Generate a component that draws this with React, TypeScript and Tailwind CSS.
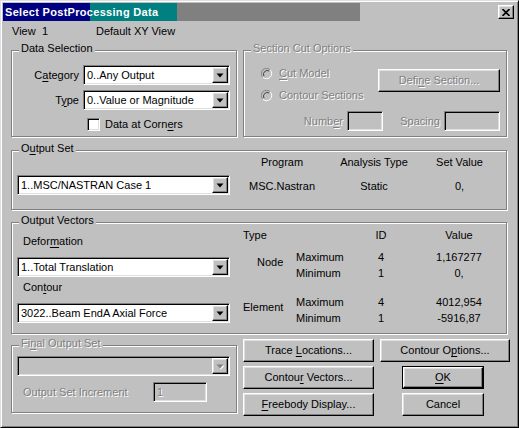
import React from 'react';

const sunken =
  'border border-t-[#808080] border-l-[#808080] border-b-white border-r-white shadow-[inset_1px_1px_0_#000,inset_-1px_-1px_0_#dfdfdf]';
const raised =
  'border border-t-white border-l-white border-b-black border-r-black shadow-[inset_-1px_-1px_0_#808080,inset_1px_1px_0_#dfdfdf]';
const dim = 'text-[#808080] [text-shadow:1px_1px_0_#fff]';

function U({ children }: { children: React.ReactNode }) {
  return <span className="underline underline-offset-[2px]">{children}</span>;
}

function Arrow({ disabled }: { disabled?: boolean }) {
  return (
    <svg width="8" height="5" viewBox="0 0 8 5" className={disabled ? 'drop-shadow-[1px_1px_0_#fff]' : ''}>
      <polygon points="0.5,0.5 7.5,0.5 4,4.5" fill={disabled ? '#808080' : '#000'} />
    </svg>
  );
}

function Combo({ text, className, disabled }: { text?: string; className: string; disabled?: boolean }) {
  return (
    <div className={`${sunken} flex h-[20px] p-[1px] ${disabled ? 'bg-[#c0c0c0]' : 'bg-white'} ${className}`}>
      <div className="flex flex-1 items-center overflow-hidden whitespace-nowrap pl-[2px]">{text}</div>
      <div className={`${raised} flex h-[16px] w-[16px] items-center justify-center bg-[#c0c0c0]`}>
        <Arrow disabled={disabled} />
      </div>
    </div>
  );
}

function Group({
  label,
  disabled,
  className,
  children,
}: {
  label: React.ReactNode;
  disabled?: boolean;
  className: string;
  children?: React.ReactNode;
}) {
  return (
    <div className={`relative border border-[#808080] shadow-[1px_1px_0_#fff,inset_1px_1px_0_#fff] ${className}`}>
      <span className={`absolute left-[7px] top-[-9px] bg-[#c0c0c0] px-[2px] whitespace-nowrap ${disabled ? dim : ''}`}>
        {label}
      </span>
      {children}
    </div>
  );
}

function Button({
  children,
  className,
  disabled,
  isDefault,
}: {
  children: React.ReactNode;
  className: string;
  disabled?: boolean;
  isDefault?: boolean;
}) {
  const inner = (
    <div
      className={`${raised} flex h-full w-full items-center justify-center whitespace-nowrap bg-[#c0c0c0] ${disabled ? dim : ''}`}
    >
      <span>{children}</span>
    </div>
  );
  if (isDefault) {
    return <div className={`border border-black ${className}`}>{inner}</div>;
  }
  return <div className={className}>{inner}</div>;
}

function Radio() {
  return (
    <svg width="12" height="12" viewBox="0 0 12 12">
      <circle cx="6" cy="6" r="5" fill="#c0c0c0" />
      <path d="M1.8 9.2 A5 5 0 0 1 9.2 1.8" fill="none" stroke="#808080" strokeWidth="1" />
      <path d="M9.2 1.8 A5 5 0 0 1 1.8 9.2" fill="none" stroke="#fff" strokeWidth="1" />
      <path d="M3 8.2 A3.8 3.8 0 0 1 8.2 3" fill="none" stroke="#404040" strokeWidth="1" />
    </svg>
  );
}

function Edit({ className, text }: { className: string; text?: string }) {
  return (
    <div className={`${sunken} flex h-[20px] items-center bg-[#c0c0c0] p-[1px] pl-[3px] ${dim} ${className}`}>{text}</div>
  );
}

function ValueRow({ label, id, value }: { label: string; id: string; value: string }) {
  return (
    <div className="flex h-[16px]">
      <div className="w-[64px]">{label}</div>
      <div className="w-[42px] text-center">{id}</div>
      <div className="w-[17px]" />
      <div className="w-[80px] text-center">{value}</div>
    </div>
  );
}

export default function App() {
  return (
    <div className="h-[428px] w-[519px] border border-t-[#dfdfdf] border-l-[#dfdfdf] border-b-black border-r-black bg-[#c0c0c0] p-[2px] font-['Liberation_Sans',Arial,sans-serif] text-[11px] leading-[13px] text-black shadow-[inset_1px_1px_0_#fff,inset_-1px_-1px_0_#808080]">
      {/* title bar */}
      <div className="flex h-[18px] items-center bg-[linear-gradient(to_right,#000080_0_87px,#008080_87px_174px,#808080_174px_357px,transparent_357px)]">
        <span className="pl-[2px] text-[11px] font-bold tracking-[0.3px] text-white">Select PostProcessing Data</span>
        <div className={`${raised} ml-auto mr-[2px] flex h-[14px] w-[16px] items-center justify-center bg-[#c0c0c0]`}>
          <svg width="8" height="7" viewBox="0 0 8 7">
            <path d="M0.5 0 L7.5 7 M7.5 0 L0.5 7" stroke="#000" strokeWidth="1.6" />
          </svg>
        </div>
      </div>

      <div className="pl-[8px]">
        {/* view row */}
        <div className="mt-[4px] flex h-[13px] pl-[1px]">
          <div className="w-[30px]">View</div>
          <div className="w-[54px]">1</div>
          <div>Default XY View</div>
        </div>

        {/* data selection + section cut */}
        <div className="mt-[12px] flex gap-[6px]">
          <Group label="Data Selection" className="h-[87px] w-[226px]">
            <div className="mt-[14px] flex items-center gap-[4px]">
              <div className="w-[67px] text-right">
                C<U>a</U>tegory
              </div>
              <Combo text="0..Any Output" className="w-[147px]" />
            </div>
            <div className="mt-[5px] flex items-center gap-[4px]">
              <div className="w-[67px] text-right">
                T<U>y</U>pe
              </div>
              <Combo text="0..Value or Magnitude" className="w-[147px]" />
            </div>
            <div className="ml-[75px] mt-[8px] flex items-center gap-[5px]">
              <div className={`${sunken} h-[13px] w-[13px] bg-white`} />
              <span>
                Data at Corn<U>e</U>rs
              </span>
            </div>
          </Group>

          <Group label="Section Cut Options" disabled className="h-[87px] w-[264px]">
            <div className="flex h-[60px]">
              <div className="flex w-[134px] flex-col gap-[9px] pl-[17px] pt-[16px]">
                <div className="flex h-[13px] items-center gap-[6px]">
                  <Radio />
                  <span className={dim}>
                    <U>C</U>ut Model
                  </span>
                </div>
                <div className="flex h-[13px] items-center gap-[6px]">
                  <Radio />
                  <span className={dim}>Contour Sections</span>
                </div>
              </div>
              <div className="pt-[18px]">
                <Button disabled className="h-[23px] w-[122px]">
                  Defi<U>n</U>e Section...
                </Button>
              </div>
            </div>
            <div className="flex items-center">
              <div className={`w-[99px] text-right ${dim}`}>
                Numb<U>e</U>r
              </div>
              <Edit className="ml-[4px] w-[36px]" />
              <div className={`w-[57px] text-right ${dim}`}>Spacing</div>
              <Edit className="ml-[4px] w-[56px]" />
            </div>
          </Group>
        </div>

        {/* output set */}
        <Group
          label={
            <>
              O<U>u</U>tput Set
            </>
          }
          className="mt-[13px] h-[60px] w-[496px]"
        >
          <div className="flex">
            <div className="w-[232px] pl-[5px] pt-[24px]">
              <Combo text="1..MSC/NASTRAN Case 1" className="w-[213px]" />
            </div>
            <div className="grid grid-cols-[76px_108px_63px] gap-y-[9px] pt-[5px] text-center">
              <div>Program</div>
              <div>Analysis Type</div>
              <div>Set Value</div>
              <div>MSC.Nastran</div>
              <div>Static</div>
              <div>0,</div>
            </div>
          </div>
        </Group>

        {/* output vectors */}
        <Group label="Output Vectors" className="mt-[12px] h-[112px] w-[496px]">
          <div className="flex">
            <div className="w-[228px] pl-[5px] pt-[12px]">
              <div className="pl-[6px]">
                Defor<U>m</U>ation
              </div>
              <Combo text="1..Total Translation" className="mt-[9px] w-[213px]" />
              <div className="mt-[4px] pl-[6px]">
                Con<U>t</U>our
              </div>
              <Combo text="3022..Beam EndA Axial Force" className="mt-[9px] w-[213px]" />
            </div>
            <div className="pt-[6px]">
              <div className="flex h-[13px]">
                <div className="w-[56px] pl-[3px]">Type</div>
                <div className="w-[64px]" />
                <div className="w-[42px] text-center">ID</div>
                <div className="w-[17px]" />
                <div className="w-[80px] text-center">Value</div>
              </div>
              <div className="mt-[9px] flex">
                <div className="w-[56px] pl-[17px] pt-[5px]">Node</div>
                <div>
                  <ValueRow label="Maximum" id="4" value="1,167277" />
                  <ValueRow label="Minimum" id="1" value="0," />
                </div>
              </div>
              <div className="mt-[13px] flex">
                <div className="w-[56px] pl-[3px] pt-[5px]">Element</div>
                <div>
                  <ValueRow label="Maximum" id="4" value="4012,954" />
                  <ValueRow label="Minimum" id="1" value="-5916,87" />
                </div>
              </div>
            </div>
          </div>
        </Group>

        {/* bottom row */}
        <div className="mt-[5px] flex">
          <div className="w-[232px] pt-[6px]">
            <Group
              label={
                <>
                  Fi<U>n</U>al Output Set
                </>
              }
              disabled
              className="h-[68px] w-[226px]"
            >
              <Combo disabled className="ml-[5px] mt-[10px] w-[213px]" />
              <div className="mt-[6px] flex items-center">
                <div className={`ml-[11px] w-[130px] ${dim}`}>Output Set Increment</div>
                <Edit className="w-[54px]" text="1" />
              </div>
            </Group>
          </div>
          <div className="flex flex-col gap-[4px]">
            <div className="flex gap-[6px]">
              <Button className="h-[23px] w-[131px]">
                Trace <U>L</U>ocations...
              </Button>
              <Button className="h-[23px] w-[130px]">
                Contour O<U>p</U>tions...
              </Button>
            </div>
            <div className="flex">
              <Button className="h-[23px] w-[131px]">
                Contou<U>r</U> Vectors...
              </Button>
              <Button isDefault className="ml-[28px] h-[23px] w-[82px]">
                <U>O</U>K
              </Button>
            </div>
            <div className="flex">
              <Button className="h-[23px] w-[131px]">
                <U>F</U>reebody Display...
              </Button>
              <Button className="ml-[28px] h-[23px] w-[82px]">Cancel</Button>
            </div>
          </div>
        </div>
      </div>
    </div>
  );
}
